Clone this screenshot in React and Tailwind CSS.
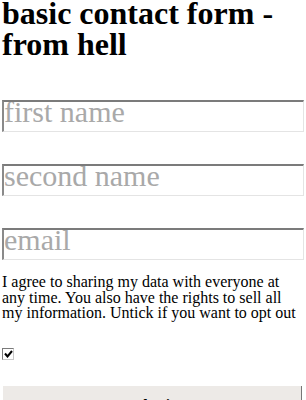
import { useState } from "react";

const fields = ["first name", "second name", "email"];

const App = () => {
  const [agree, setAgree] = useState(true);

  return (
    <div className="min-h-[400px] overflow-hidden bg-white px-[2px] text-black [font-family:'Liberation_Serif',Times,serif]">
      <form className="flex flex-col" onSubmit={(event) => event.preventDefault()}>
        <h1 className="-mt-[2px] text-[32px] font-bold leading-[31px]">
          basic contact form - from hell
        </h1>

        {fields.map((name, i) => (
          <input
            key={name}
            type="text"
            placeholder={name}
            className={`${i === 0 ? "mt-[40px]" : "mt-[32px]"} h-[32px] w-full border-t-2 border-l-2 border-r border-b border-t-[#7b7b7b] border-l-[#8a8a8a] border-r-[#e4e4e4] border-b-[#e4e4e4] bg-white px-0 pt-0 pb-[9px] text-[30px] leading-[20px] outline-none placeholder:text-[#a9a9a9]`}
          />
        ))}

        <p className="mt-[14px] text-[16px] leading-[15.5px]">
          I agree to sharing my data with everyone at any time. You also have
          the rights to sell all my information. Untick if you want to opt out
        </p>

        <label className="mt-[27px] flex h-[12px] w-[12px] cursor-pointer">
          <input
            type="checkbox"
            checked={agree}
            onChange={(event) => setAgree(event.target.checked)}
            className="sr-only"
          />
          <span className="flex h-[12px] w-[12px] items-center justify-center border border-t-[#7a7a7a] border-l-[#7a7a7a] border-r-[#c9c9c9] border-b-[#c9c9c9] bg-white">
            {agree && (
              <svg width="9" height="8" viewBox="0 0 9 8">
                <path
                  d="M1 3.5 L3.5 6.5 L8 1"
                  fill="none"
                  stroke="#000"
                  strokeWidth="2"
                />
              </svg>
            )}
          </span>
        </label>

        <button
          type="submit"
          className="mt-[26px] ml-[1px] w-[299px] border-r border-r-[#777] bg-[#edeae7] pt-[8px] pb-[7px] text-center text-[16px] font-bold"
        >
          submit
        </button>
      </form>
    </div>
  );
};

export default App;
